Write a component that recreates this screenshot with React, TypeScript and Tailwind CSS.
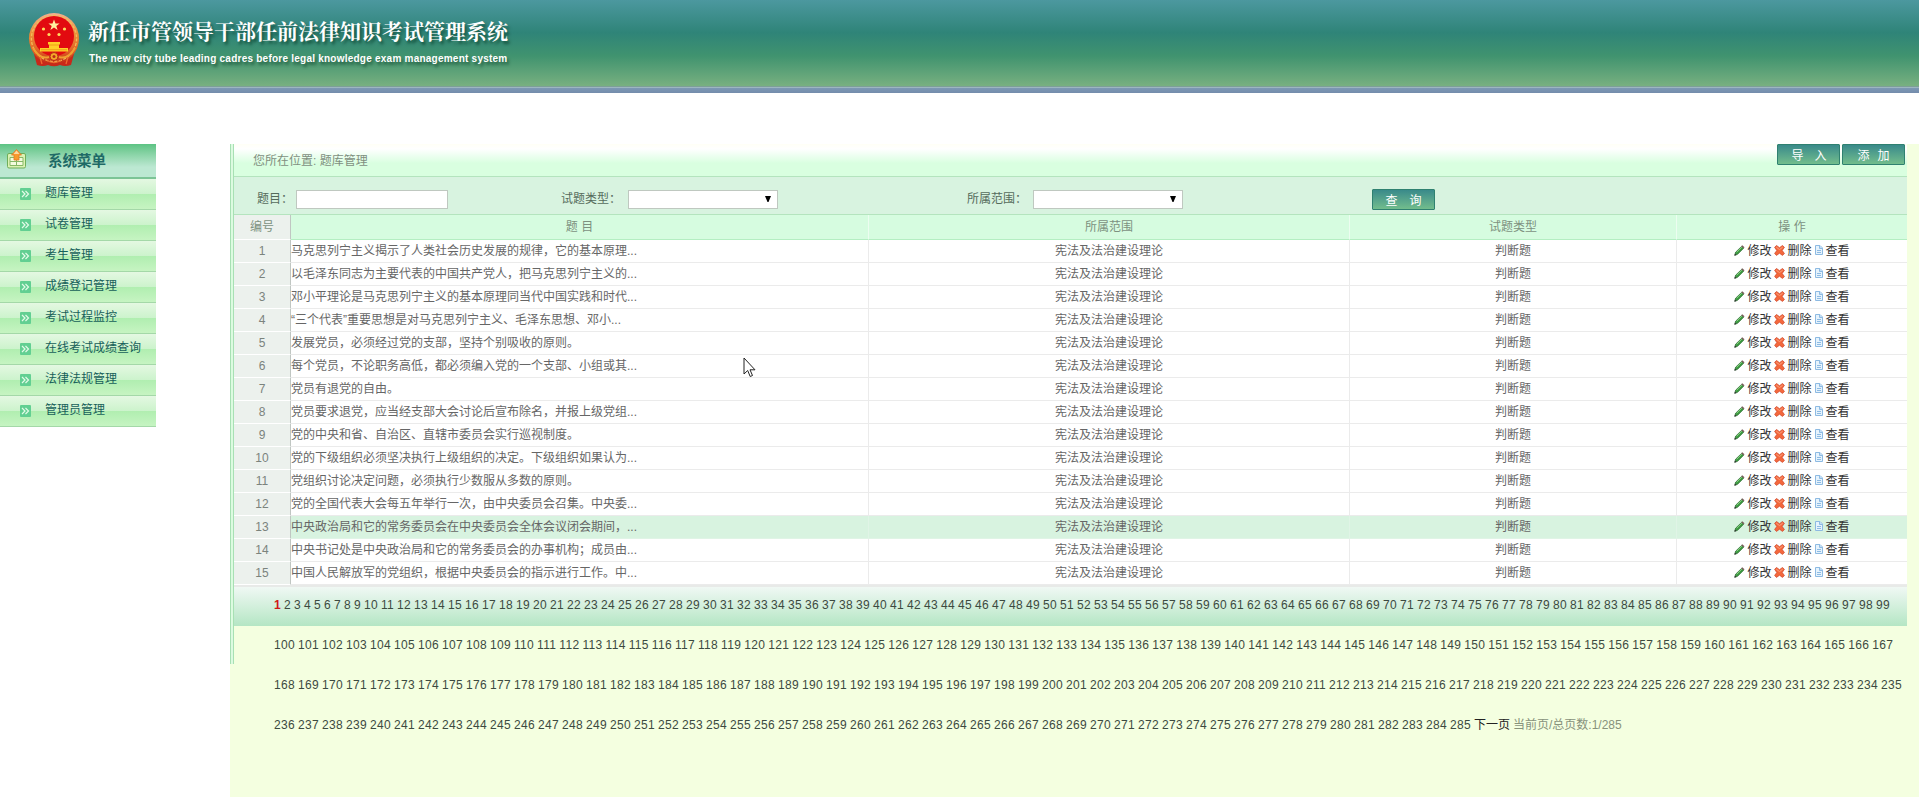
import React from "react";

const MENU = ["题库管理", "试卷管理", "考生管理", "成绩登记管理", "考试过程监控", "在线考试成绩查询", "法律法规管理", "管理员管理"];

const QUESTIONS = [
  "马克思列宁主义揭示了人类社会历史发展的规律，它的基本原理...",
  "以毛泽东同志为主要代表的中国共产党人，把马克思列宁主义的...",
  "邓小平理论是马克思列宁主义的基本原理同当代中国实践和时代...",
  "“三个代表”重要思想是对马克思列宁主义、毛泽东思想、邓小...",
  "发展党员，必须经过党的支部，坚持个别吸收的原则。",
  "每个党员，不论职务高低，都必须编入党的一个支部、小组或其...",
  "党员有退党的自由。",
  "党员要求退党，应当经支部大会讨论后宣布除名，并报上级党组...",
  "党的中央和省、自治区、直辖市委员会实行巡视制度。",
  "党的下级组织必须坚决执行上级组织的决定。下级组织如果认为...",
  "党组织讨论决定问题，必须执行少数服从多数的原则。",
  "党的全国代表大会每五年举行一次，由中央委员会召集。中央委...",
  "中央政治局和它的常务委员会在中央委员会全体会议闭会期间，...",
  "中央书记处是中央政治局和它的常务委员会的办事机构；成员由...",
  "中国人民解放军的党组织，根据中央委员会的指示进行工作。中...",
];

const PAGE_LINES: [number, number][] = [[1, 99], [100, 167], [168, 235], [236, 285]];
const HOVERED_ROW = 13;

function range(from: number, to: number) {
  return Array.from({ length: to - from + 1 }, (_, i) => from + i);
}

function Emblem() {
  return (
    <svg width="52" height="56" viewBox="0 0 52 56">
      <defs>
        <linearGradient id="gold" x1="0" y1="0" x2="0" y2="1">
          <stop offset="0" stopColor="#f2b090" />
          <stop offset="0.4" stopColor="#ec9038" />
          <stop offset="0.75" stopColor="#e06024" />
          <stop offset="1" stopColor="#c02a18" />
        </linearGradient>
      </defs>
      <path d="M6 42 L9 53 Q15 55 20 53 Q26 55.500 32 53 Q37 55 43 53 L46 42Z" fill="#c8281a" />
      <ellipse cx="26" cy="26.500" rx="25" ry="25.500" fill="url(#gold)" />
      <ellipse cx="26" cy="26.500" rx="22.600" ry="23" fill="none" stroke="#f4bc58" strokeWidth="1.300" strokeDasharray="3 1.600" />
      <circle cx="26" cy="24" r="20" fill="#e20a10" />
      <path d="M26 7.500l1.500 4h4.100l-3.300 2.500 1.300 4-3.600-2.400-3.600 2.400 1.300-4-3.300-2.500h4.100z" fill="#fff0a0" />
      <g fill="#ffdc60">
        <circle cx="15.500" cy="17" r="1.600" />
        <circle cx="36.500" cy="17" r="1.600" />
        <circle cx="21" cy="22.500" r="1.600" />
        <circle cx="31" cy="22.500" r="1.600" />
      </g>
      <path d="M20 30h12v2.500h-1v3.500h9v3.500H12v-3.500h9v-3.500h-1z" fill="#ffcf28" />
      <path d="M21 33h10M13 37.800h26" stroke="#e88a10" strokeWidth="0.700" />
      <path d="M5 36Q12 48 21 45M47 36Q40 48 31 45" stroke="#f0a030" strokeWidth="2" fill="none" />
      <circle cx="26" cy="44.500" r="4" fill="#f4a828" stroke="#b82818" strokeWidth="1" />
      <circle cx="26" cy="44.500" r="1.500" fill="#b82818" />
      <path d="M12 45l2 7M40 45l-2 7M19 48.500q7 4 14 0" stroke="#ee6a30" strokeWidth="1.300" fill="none" />
    </svg>
  );
}

function MenuHeadIcon() {
  return (
    <svg width="19" height="20" viewBox="0 0 19 20">
      <rect x="0.500" y="4.500" width="18" height="14.500" rx="1.500" fill="#dcf2b4" stroke="#6fae58" />
      <path d="M3 8.500h13v8H3zM3 12.500h13M9.500 10v6.500" fill="#f4fbdf" stroke="#86b866" />
      <path d="M9.500 0.500l5 5.500h-2.500v5h-5V6H4.500z" fill="#f89a2c" stroke="#e0782a" strokeWidth="0.800" />
      <path d="M9.500 1.500l3 3.500h-6z" fill="#fdd8a0" />
    </svg>
  );
}

function BulletIcon() {
  return (
    <svg width="11" height="12" viewBox="0 0 11 12">
      <rect width="11" height="12" rx="1" fill="#62cf92" />
      <path d="M2 3l3 3-3 3M5.500 3l3 3-3 3" fill="none" stroke="#e4fbe8" strokeWidth="1.200" />
    </svg>
  );
}

function PencilIcon() {
  return (
    <svg width="11" height="11" viewBox="0 0 11 11">
      <path d="M0.800 10.200l0.800-3 6-5.800 2 1.900-6 6z" fill="#3c9a40" stroke="#2c6e34" strokeWidth="0.700" />
      <path d="M2.700 7.300l5.200-5.200" stroke="#8fd488" strokeWidth="0.900" />
      <path d="M7.300 1.200l1-0.900 2.200 2-0.900 1z" fill="#7a5a58" />
      <path d="M0.300 10.700l0.700-2.200 1.600 1.500z" fill="#333" />
    </svg>
  );
}

function CrossIcon() {
  return (
    <svg width="11" height="11" viewBox="0 0 11 11">
      <path d="M0.600 2.300l1.900-1.800 3 2.200 3-2.200 1.900 1.800-2.200 3.200 2.200 3-1.900 1.900-3-2.200-3 2.200-1.900-1.900 2.200-3z" fill="#f4683c" stroke="#d24e32" strokeWidth="0.800" />
      <path d="M2.300 2.200l3.200 2.400 3.200-2.400" stroke="#fba888" strokeWidth="0.900" fill="none" />
    </svg>
  );
}

function DocIcon() {
  return (
    <svg width="8" height="10" viewBox="0 0 8 10">
      <path d="M0.500 0.500h4.500l2.500 2.500v6.500h-7z" fill="#e6f3fd" stroke="#8dbae2" />
      <path d="M4.500 0.500v3h3" fill="#c2def6" stroke="#8dbae2" />
      <path d="M2 5.500h4M2 7.500h4" stroke="#8dbae2" />
    </svg>
  );
}

function GreenButton({ first, second, gap }: { first: string; second: string; gap: string }) {
  return (
    <button className={`flex h-[21px] w-[63px] shrink-0 items-center justify-center rounded-[1px] border border-[#2f8170] bg-linear-to-b from-[#398a8a] to-[#72bd8c] pt-[2px] text-[12px] leading-none text-white ${gap}`}>
      <span>{first}</span>
      <span>{second}</span>
    </button>
  );
}

function SelectBox() {
  return (
    <div className="flex h-[19px] w-[150px] shrink-0 items-center justify-end border border-[#bfc8c0] bg-white pr-[6px]">
      <svg width="6" height="6" viewBox="0 0 6 6" className="-mt-[2px]">
        <path d="M0 0h6L3.500 6h-1z" fill="#000" />
      </svg>
    </div>
  );
}

const GRID = "grid grid-cols-[57px_578px_481px_327px_230px]";

export default function App() {
  return (
    <div className="relative flex h-[797px] w-[1919px] flex-col overflow-hidden bg-white font-['Liberation_Sans','Noto_Sans_CJK_SC',sans-serif] text-[12px] text-[#666]">
      <header className="flex h-[93px] shrink-0 flex-col">
        <div className="flex h-[86px] bg-[linear-gradient(to_bottom,#4c989f_0,#2f8478_38%,#40936f_65%,#78b080_100%)] pl-[28px] pt-[12px]">
          <Emblem />
          <div className="ml-[8px] flex flex-col pt-[2px] text-white">
            <h1 className="whitespace-nowrap font-['Noto_Serif_CJK_SC','Noto_Sans_CJK_SC',serif] text-[21px] font-bold leading-[32px] [text-shadow:2px_3px_3px_rgba(0,50,30,0.6)]">新任市管领导干部任前法律知识考试管理系统</h1>
            <p className="whitespace-nowrap pl-[1px] pt-[6px] text-[10px] font-bold leading-[14px] tracking-[0.235px] [text-shadow:2px_3px_3px_rgba(0,50,30,0.6)]">The new city tube leading cadres before legal knowledge exam management system</p>
          </div>
        </div>
        <div className="h-[1px] bg-[#7d9f98]" />
        <div className="h-[1px] bg-[#9db6c0]" />
        <div className="h-[5px] bg-linear-to-b from-[#7c98b4] to-[#748cac]" />
      </header>

      <div className="flex flex-1 pt-[51px]">
        <nav className="h-[284px] w-[156px] shrink-0">
          <div className="flex h-[35px] items-center border-b-2 border-[#7cc496] bg-linear-to-b from-[#5cc384] to-[#bce8d2] to-70% pl-[7px]">
            <div className="-mt-[3px]"><MenuHeadIcon /></div>
            <span className="ml-[22px] pt-[1px] text-[14.500px] font-bold leading-none text-[#1f6a66]">系统菜单</span>
          </div>
          {MENU.map((m) => (
            <div key={m} className="flex h-[31px] items-center border-b border-[#a4d8a8] bg-[linear-gradient(to_bottom,#e4f8e2_0,#ccf3cc_50%,#b0eeb0_50%,#c6f4c2_100%)] pl-[20px]">
              <BulletIcon />
              <span className="-mt-[2px] ml-[14px] whitespace-nowrap leading-none text-[#17605a]">{m}</span>
            </div>
          ))}
        </nav>

        <main className="ml-[74px] flex h-[653px] flex-1 bg-[#f4ffe0]">
          <div className="h-[520px] w-[4px] shrink-0 border-x border-[#a8e0b4] bg-[#dcfbe0]" />
          <div className="flex w-[1673px] flex-col">
            <div className="flex h-[33px] shrink-0 justify-between border-b border-[#b4e4be] bg-[linear-gradient(to_bottom,#fffff6_0,#ffffff_15%,#d9ffe0_60%,#d9ffe0_100%)] pl-[19px] pr-[2px]">
              <span className="pt-[1px] leading-[33px] text-[#7f8f7f]">您所在位置: 题库管理</span>
              <div className="flex gap-[2px]">
                <GreenButton first="导" second="入" gap="gap-[11px] pl-[1px]" />
                <GreenButton first="添" second="加" gap="gap-[8px]" />
              </div>
            </div>

            <div className="flex h-[38px] shrink-0 items-start border-b border-[#b4e4be] bg-[#d8f3e0] pl-[23px] pt-[12px] leading-[21px] text-[#556b5c]">
              <span className="w-[39px] shrink-0">题目：</span>
              <div className="mt-[1px] h-[19px] w-[152px] shrink-0 border border-[#bfc8c0] bg-white" />
              <span className="ml-[113px] w-[67px] shrink-0">试题类型：</span>
              <div className="mt-[1px]"><SelectBox /></div>
              <span className="ml-[189px] w-[66px] shrink-0">所属范围：</span>
              <div className="mt-[1px]"><SelectBox /></div>
              <div className="ml-[189px]"><GreenButton first="查" second="询" gap="gap-[12px]" /></div>
            </div>

            <div className={`${GRID} h-[25px] shrink-0 text-center leading-[24px] text-[#7d917f]`}>
              <div className="border-b border-r border-b-white border-r-[#c0c6c2] bg-[#ecf1ed]">编号</div>
              <div className="border-b border-r border-b-[#b4eec2] border-r-[#ecfdf0] bg-[#d6fce0]">题 目</div>
              <div className="border-b border-r border-b-[#b4eec2] border-r-[#ecfdf0] bg-[#d6fce0]">所属范围</div>
              <div className="border-b border-r border-b-[#b4eec2] border-r-[#ecfdf0] bg-[#d6fce0]">试题类型</div>
              <div className="border-b border-b-[#b4eec2] bg-[#d6fce0]">操 作</div>
            </div>

            {QUESTIONS.map((q, i) => {
              const cell = i + 1 === HOVERED_ROW ? "border-[#e0f4e6] bg-[#d8f3e0]" : "border-[#ebebeb] bg-white";
              return (
                <div key={q} className={`${GRID} h-[23px] shrink-0 text-center leading-[22px]`}>
                  <div className="border-b border-r border-b-white border-r-[#c0c6c2] bg-[#ecf1ed] text-[#7b837d]">{i + 1}</div>
                  <div className={`whitespace-nowrap border-b border-r text-left ${cell}`}>{q}</div>
                  <div className={`border-b border-r ${cell}`}>宪法及法治建设理论</div>
                  <div className={`border-b border-r ${cell}`}>判断题</div>
                  <div className={`flex items-center justify-center border-b text-[#333] ${cell}`}>
                    <div className="-mt-[2px]"><PencilIcon /></div>
                    <span className="ml-[2px] mr-[3px]">修改</span>
                    <div className="-mt-[2px]"><CrossIcon /></div>
                    <span className="ml-[2px] mr-[3px]">删除</span>
                    <div className="-mt-[2px]"><DocIcon /></div>
                    <span className="ml-[3px]">查看</span>
                  </div>
                </div>
              );
            })}

            <div className="h-[41px] shrink-0 border-t-2 border-[#e8eae8] bg-linear-to-b from-[#f0f8f4] to-[#b4e6c4] pl-[40px]">
              {PAGE_LINES.map(([from, to]) => (
                <div key={from} className="h-[40px] whitespace-nowrap leading-[36px] tracking-[0.330px] text-[#333] [word-spacing:-0.690px]">
                  {range(from, to).map((n) => (
                    <React.Fragment key={n}>
                      <a className={n === 1 ? "font-bold text-[#d01818]" : "text-[#3c4a40]"}>{n}</a>{" "}
                    </React.Fragment>
                  ))}
                  {to === 285 && (
                    <>
                      <a className="tracking-normal text-[#222]">下一页</a>{" "}
                      <span className="tracking-normal text-[#87927c]">当前页/总页数:1/285</span>
                    </>
                  )}
                </div>
              ))}
            </div>
          </div>
        </main>
      </div>

      <svg className="absolute left-[743px] top-[357px]" width="13" height="21" viewBox="0 0 13 21">
        <path d="M1 1v16l3.700-3.500 2.500 6 2.300-1-2.500-5.700H12z" fill="#fff" stroke="#222" strokeWidth="1" />
      </svg>
    </div>
  );
}
